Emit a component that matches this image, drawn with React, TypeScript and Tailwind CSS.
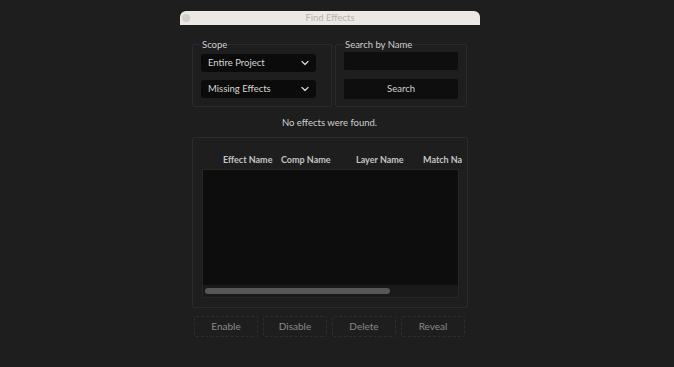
import { ChevronDown } from 'lucide-react'

const FONT = 'font-["Lato","Open_Sans",sans-serif]'

function Dropdown({ label }: { label: string }) {
  return (
    <div className="flex h-[18px] w-[115px] items-center justify-between rounded-[3px] bg-[#0b0b0b] pl-[7px] pr-[5px] text-[9.5px] text-[#d6d6d6]">
      <span>{label}</span>
      <ChevronDown size={12} strokeWidth={2.5} className="text-[#d4d4d4]" />
    </div>
  )
}

function ActionButton({ label }: { label: string }) {
  return (
    <button className="flex h-[21px] w-[64px] items-center justify-center rounded-[2px] border border-dashed border-[#2e2e2e] text-[10px] text-[#8a8a8a]">
      {label}
    </button>
  )
}

export default function App() {
  return (
    <div className={`h-[367px] w-full bg-[#1e1e1e] ${FONT}`}>
      <div className="ml-[180px] w-[300px] pt-[11px]">
        {/* Title bar */}
        <div className="flex h-[14px] items-center rounded-t-[6px] bg-[#ece8e3] px-[2px]">
          <div className="h-[8px] w-[8px] rounded-full bg-[#d3cfca]" />
          <div className="flex-1 pr-[8px] text-center text-[9.5px] leading-none text-[#b7b3ae]">Find Effects</div>
        </div>

        {/* Body */}
        <div className="pl-[12px] pr-[13px]">
          <div className="mt-[14px] flex gap-[3px]">
            <fieldset className="h-[68px] w-[140px] rounded-[2px] border border-[#2b2b2b] px-[8px]">
              <legend className="px-[1px] text-[9.5px] leading-[11px] text-[#cfcfcf]">Scope</legend>
              <div className="mt-[4px] flex flex-col gap-[8px]">
                <Dropdown label="Entire Project" />
                <Dropdown label="Missing Effects" />
              </div>
            </fieldset>
            <fieldset className="h-[68px] w-[132px] rounded-[2px] border border-[#2b2b2b] px-[8px]">
              <legend className="px-[1px] text-[9.5px] leading-[11px] text-[#cfcfcf]">Search by Name</legend>
              <div className="mt-[2px] flex flex-col gap-[9px]">
                <div className="h-[18px] w-[114px] rounded-[2px] bg-[#0e0e0e]" />
                <button className="h-[20px] w-[114px] rounded-[2px] bg-[#0e0e0e] text-[9.5px] text-[#d2d2d2]">Search</button>
              </div>
            </fieldset>
          </div>

          <div className="mt-[9px] text-center text-[9.5px] text-[#d0d0d0]">No effects were found.</div>

          {/* Results table */}
          <div className="mt-[7px] h-[171px] w-[276px] rounded-[2px] border border-[#2b2b2b] px-[9px] pt-[12px]">
            <div className="flex h-[18px] items-center whitespace-nowrap text-[9px] font-bold text-[#c4c4c4]">
              <span className="ml-[21px] w-[58px] shrink-0">Effect Name</span>
              <span className="w-[75px] shrink-0">Comp Name</span>
              <span className="w-[67px] shrink-0">Layer Name</span>
              <span className="shrink-0">Match Na</span>
            </div>
            <div className="mt-[1px] flex h-[129px] w-[257px] flex-col border border-[#262626] bg-[#0d0d0d]">
              <div className="flex-1" />
              <div className="flex h-[12px] items-center bg-[#1a1a1a] px-[2px]">
                <div className="h-[6px] w-[185px] rounded-full bg-[#565656]" />
              </div>
            </div>
          </div>

          {/* Actions */}
          <div className="mt-[8px] flex gap-[5px] pl-[2px]">
            <ActionButton label="Enable" />
            <ActionButton label="Disable" />
            <ActionButton label="Delete" />
            <ActionButton label="Reveal" />
          </div>
        </div>
      </div>
    </div>
  )
}
